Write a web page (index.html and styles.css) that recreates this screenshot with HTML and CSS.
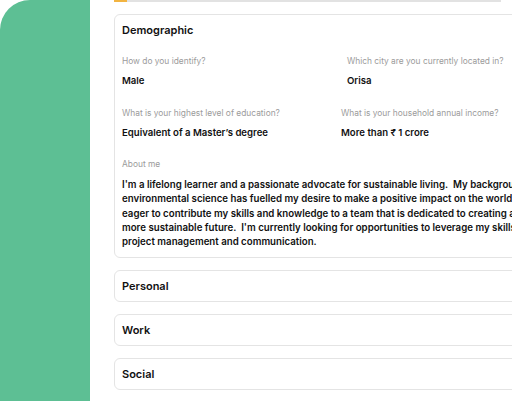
FILE: index.html
```html
<!DOCTYPE html>
<html>
<head>
<meta charset="utf-8">
<link rel="stylesheet" href="styles.css">
</head>
<body>
<div class="page">
  <aside class="side"></aside>
  <main class="main">
    <div class="progress"><div class="progress-fill" style="width:13px"></div></div>
    <section class="card card-open">
      <h2 class="card-title">Demographic</h2>
      <div class="row row-a">
        <div class="field">
          <div class="label">How do you identify?</div>
          <div class="value">Male</div>
        </div>
        <div class="field">
          <div class="label">Which city are you currently located in?</div>
          <div class="value">Orisa</div>
        </div>
      </div>
      <div class="row row-b">
        <div class="field">
          <div class="label">What is your highest level of education?</div>
          <div class="value">Equivalent of a Master’s degree</div>
        </div>
        <div class="field">
          <div class="label">What is your household annual income?</div>
          <div class="value">More than ₹ 1 crore</div>
        </div>
      </div>
      <div class="field about-field">
        <div class="label">About me</div>
        <p class="about">I'm a lifelong learner and a passionate advocate for sustainable living.&nbsp; My background in<br>environmental science has fuelled my desire to make a positive impact on the world, and I'm<br>eager to contribute my skills and knowledge to a team that is dedicated to creating a<br>more sustainable future.&nbsp; I'm currently looking for opportunities to leverage my skills in<br>project management and communication.</p>
      </div>
    </section>
    <section class="card card-closed"><h2 class="card-title">Personal</h2></section>
    <section class="card card-closed"><h2 class="card-title">Work</h2></section>
    <section class="card card-closed"><h2 class="card-title">Social</h2></section>
  </main>
</div>
</body>
</html>
```
FILE: styles.css
```css
html, body {
  margin: 0;
  padding: 0;
  background: #ffffff;
  overflow: hidden;
}
body {
  font-family: Inter, "Noto Sans", sans-serif;
  color: #111111;
}
.page {
  display: flex;
  width: 512px;
  height: 401px;
  overflow: hidden;
}
.side {
  flex: 0 0 90px;
  background: #5dbf94;
  border-top-left-radius: 30px;
}
.main {
  flex: 0 0 auto;
  width: 460px;
  padding-left: 24px;
  display: flex;
  flex-direction: column;
  gap: 12px;
}
.progress {
  width: 387px;
  height: 2px;
  background: #e2e2e2;
}
.progress-fill {
  height: 2px;
  background: #f2b441;
}
.card {
  border: 1px solid #e4e4e4;
  border-radius: 6px;
  padding: 7px 7px 8px;
  display: flex;
  flex-direction: column;
}
.card-closed {
  padding-bottom: 7px;
}
.card-title {
  margin: 0;
  font-size: 11px;
  line-height: 16px;
  font-weight: 600;
}
.row {
  display: grid;
  margin-top: 17px;
}
.row-a { grid-template-columns: 225px 1fr; }
.row-b { grid-template-columns: 219px 1fr; margin-top: 19px; }
.about-field { margin-top: 18px; }
.label {
  font-size: 8.4px;
  line-height: 12px;
  color: #9b9b9b;
  white-space: nowrap;
}
.value {
  margin-top: 7px;
  font-size: 9.6px;
  line-height: 14px;
  font-weight: 600;
  white-space: nowrap;
}
.about {
  margin: 8px 0 0;
  font-size: 9.7px;
  line-height: 14.25px;
  font-weight: 600;
  white-space: nowrap;
}
```
